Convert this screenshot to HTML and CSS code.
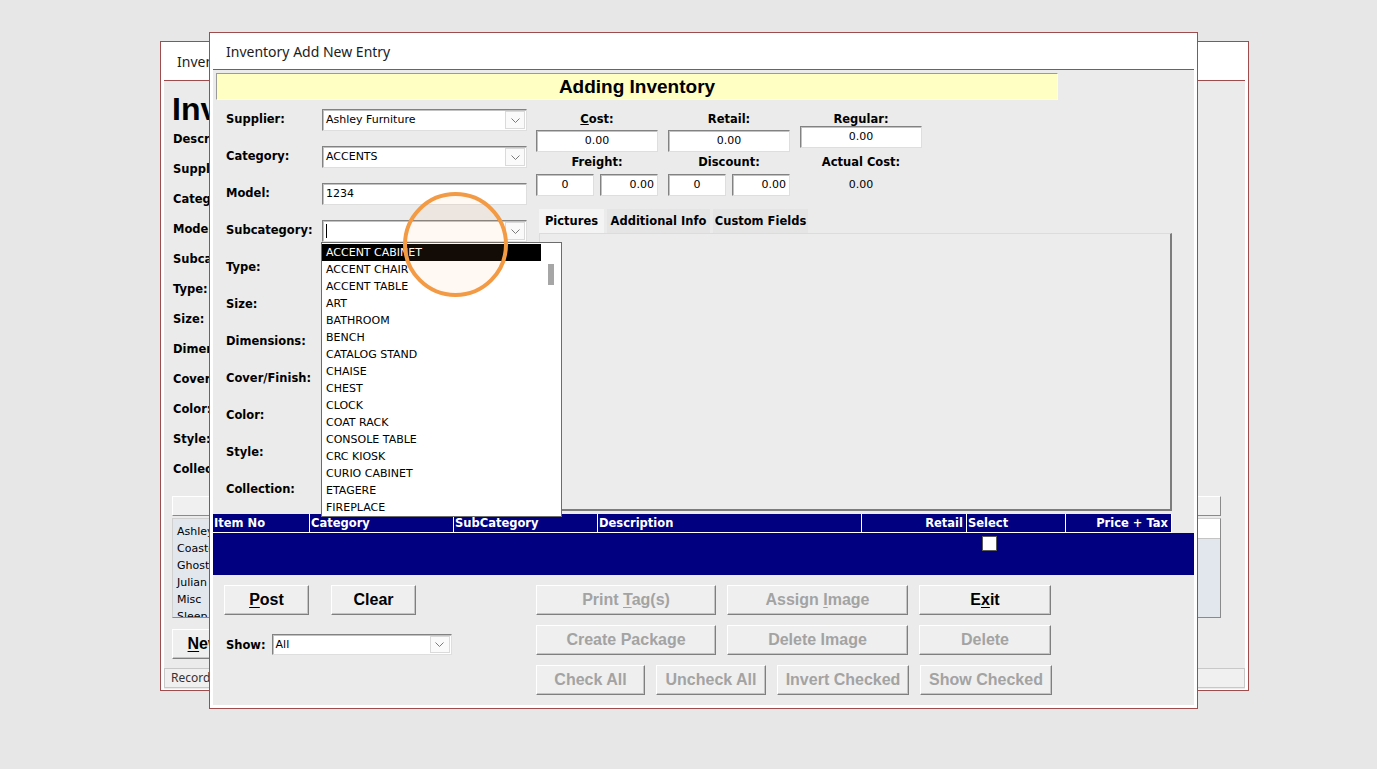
FILE: index.html
```html
<!DOCTYPE html>
<html>
<head>
  <meta charset="utf-8">
  <link rel="stylesheet" href="styles.css">
</head>
<body>
  <!-- Inventory window behind the dialog -->
  <div class="window window-back">
    <div class="window-title back-title"><span class="peek">Inventory</span></div>
    <div class="window-client back-client">
      <div class="back-heading peek">Inventory</div>
      <div class="back-fields peek">
        <span>Description:</span>
        <span>Supplier:</span>
        <span>Category:</span>
        <span>Model:</span>
        <span>Subcategory:</span>
        <span>Type:</span>
        <span>Size:</span>
        <span>Dimensions:</span>
        <span>Cover/Finish:</span>
        <span>Color:</span>
        <span>Style:</span>
        <span>Collection:</span>
      </div>
      <div class="back-bar"></div>
      <div class="back-list">
        <div class="back-names">
          <div>Ashley Furniture</div>
          <div>Coaster</div>
          <div>Ghost</div>
          <div>Julian</div>
          <div>Misc</div>
          <div>Sleep</div>
        </div>
        <div class="back-detail">
          <div class="back-detail-head"></div>
        </div>
      </div>
      <button class="btn back-new"><u>N</u>ew</button>
      <div class="back-status"><span class="peek">Record: 1 of 6</span></div>
    </div>
  </div>

  <!-- Add new entry dialog -->
  <div class="window dialog">
    <div class="window-title dialog-title">Inventory Add New Entry</div>
    <div class="window-client dialog-client">
      <div class="banner">Adding Inventory</div>

      <div class="form-top">
        <div class="field-grid">
          <span class="field-label">Supplier:</span>
          <div class="combo">
            <span class="combo-text">Ashley Furniture</span>
            <span class="combo-btn"><svg width="9" height="5" viewBox="0 0 9 5"><polyline points="0.5,0.5 4.5,4.5 8.5,0.5" fill="none" stroke="#7a7a7a"/></svg></span>
          </div>

          <span class="field-label">Category:</span>
          <div class="combo">
            <span class="combo-text">ACCENTS</span>
            <span class="combo-btn"><svg width="9" height="5" viewBox="0 0 9 5"><polyline points="0.5,0.5 4.5,4.5 8.5,0.5" fill="none" stroke="#7a7a7a"/></svg></span>
          </div>

          <span class="field-label">Model:</span>
          <div class="box box-left">1234</div>

          <span class="field-label">Subcategory:</span>
          <div class="combo">
            <span class="combo-text"><span class="caret"></span></span>
            <span class="combo-btn"><svg width="9" height="5" viewBox="0 0 9 5"><polyline points="0.5,0.5 4.5,4.5 8.5,0.5" fill="none" stroke="#7a7a7a"/></svg></span>

            <div class="dropdown">
              <div class="dropdown-items">
                <div class="dropdown-item selected">ACCENT CABINET</div>
                <div class="dropdown-item">ACCENT CHAIR</div>
                <div class="dropdown-item">ACCENT TABLE</div>
                <div class="dropdown-item">ART</div>
                <div class="dropdown-item">BATHROOM</div>
                <div class="dropdown-item">BENCH</div>
                <div class="dropdown-item">CATALOG STAND</div>
                <div class="dropdown-item">CHAISE</div>
                <div class="dropdown-item">CHEST</div>
                <div class="dropdown-item">CLOCK</div>
                <div class="dropdown-item">COAT RACK</div>
                <div class="dropdown-item">CONSOLE TABLE</div>
                <div class="dropdown-item">CRC KIOSK</div>
                <div class="dropdown-item">CURIO CABINET</div>
                <div class="dropdown-item">ETAGERE</div>
                <div class="dropdown-item">FIREPLACE</div>
              </div>
              <div class="dropdown-scroll">
                <div class="scroll-thumb"></div>
              </div>
            </div>
            <div class="callout"></div>
          </div>

          <span class="field-label">Type:</span>
          <span></span>
          <span class="field-label">Size:</span>
          <span></span>
          <span class="field-label">Dimensions:</span>
          <span></span>
          <span class="field-label">Cover/Finish:</span>
          <span></span>
          <span class="field-label">Color:</span>
          <span></span>
          <span class="field-label">Style:</span>
          <span></span>
          <span class="field-label">Collection:</span>
          <span></span>
        </div>

        <div class="form-right">
          <div class="price-grid">
            <span class="price-label"><u>C</u>ost:</span>
            <span class="price-label">Retail:</span>
            <span class="price-label">Regular:</span>

            <div class="box">0.00</div>
            <div class="box">0.00</div>
            <div class="box box-raised">0.00</div>

            <span class="price-label">Freight:</span>
            <span class="price-label">Discount:</span>
            <span class="price-label">Actual Cost:</span>

            <div class="box-pair">
              <div class="box">0</div>
              <div class="box box-right">0.00</div>
            </div>
            <div class="box-pair">
              <div class="box">0</div>
              <div class="box box-right">0.00</div>
            </div>
            <div class="price-value">0.00</div>
          </div>

          <div class="tabs">
            <span class="tab active">Pictures</span>
            <span class="tab tab-info">Additional Info</span>
            <span class="tab tab-custom">Custom Fields</span>
          </div>
          <div class="tab-panel"></div>
        </div>
      </div>

      <div class="sheet">
        <div class="sheet-head">
          <span>Item No</span>
          <span>Category</span>
          <span>SubCategory</span>
          <span>Description</span>
          <span class="num">Retail</span>
          <span>Select</span>
          <span class="num">Price + Tax</span>
        </div>
        <div class="sheet-body">
          <span class="check"></span>
        </div>
      </div>

      <div class="form-bottom">
        <div class="bottom-left">
          <div class="btn-row wide-gap">
            <button class="btn btn-small"><u>P</u>ost</button>
            <button class="btn btn-small">Clear</button>
          </div>
          <div class="show-row">
            <span class="field-label">Show:</span>
            <div class="combo combo-show">
              <span class="combo-text">All</span>
              <span class="combo-btn"><svg width="9" height="5" viewBox="0 0 9 5"><polyline points="0.5,0.5 4.5,4.5 8.5,0.5" fill="none" stroke="#7a7a7a"/></svg></span>
            </div>
          </div>
        </div>

        <div class="bottom-right">
          <div class="btn-row">
            <button class="btn disabled w180">Print <u>T</u>ag(s)</button>
            <button class="btn disabled w181">Assign <u>I</u>mage</button>
            <button class="btn w132">E<u>x</u>it</button>
          </div>
          <div class="btn-row">
            <button class="btn disabled w180">Create Package</button>
            <button class="btn disabled w181">Delete Image</button>
            <button class="btn disabled w132">Delete</button>
          </div>
          <div class="btn-row">
            <button class="btn disabled w109">Check All</button>
            <button class="btn disabled w110">Uncheck All</button>
            <button class="btn disabled w132">Invert Checked</button>
            <button class="btn disabled w132">Show Checked</button>
          </div>
        </div>
      </div>
    </div>
  </div>
</body>
</html>
```

FILE: styles.css
```css
html, body {
  width: 1377px;
  height: 769px;
}

body {
  margin: 0;
  position: relative;
  overflow: hidden;
  background: #e7e7e7;
  font-family: "DejaVu Sans", Verdana, sans-serif;
  font-size: 11px;
  color: #000;
}

/* windows */

.window {
  position: absolute;
  box-sizing: border-box;
  border: 1px solid #9e4c4c;
  background: #fff;
  display: flex;
  flex-direction: column;
}

.window-title {
  flex: none;
  display: flex;
  align-items: center;
  padding-left: 16px;
  font-family: "Noto Sans", "Open Sans", sans-serif;
  font-size: 14px;
  color: #1c1c1c;
}

.window-client {
  flex: 1;
  min-height: 0;
  margin: 0 3px 3px;
  background: #ebebeb;
  border-top: 1px solid #9e4c4c;
  overflow: hidden;
}

.window-back {
  left: 160px;
  top: 41px;
  width: 1089px;
  height: 650px;
}

.back-title {
  height: 38px;
}

.dialog {
  left: 209px;
  top: 32px;
  width: 989px;
  height: 677px;
}

.dialog-title {
  height: 36px;
}

/* back window: only its left strip shows past the dialog */

.peek {
  display: block;
  overflow: hidden;
  white-space: nowrap;
}

.back-title .peek {
  width: 32px;
}

.back-client {
  margin-bottom: 1px;
  padding: 0 24px 0 8px;
  display: flex;
  flex-direction: column;
}

.back-heading {
  width: 37px;
  margin-top: 14px;
  font-family: "Liberation Sans", Arial, sans-serif;
  font-size: 32px;
  font-weight: 700;
  line-height: 29px;
}

.back-fields {
  width: 36px;
  display: grid;
  grid-auto-rows: 30px;
  align-items: center;
  padding-left: 1px;
  font-weight: 700;
  font-size: 11.5px;
}

.back-bar {
  margin-top: 12px;
  height: 20px;
  box-sizing: border-box;
  background: #f0f0f0;
  border: 1px solid;
  border-color: #fff #8a8a8a #8a8a8a #fff;
}

.back-list {
  margin-top: 2px;
  height: 100px;
  box-sizing: border-box;
  display: flex;
  background: #e2e7ee;
  border: 1px solid;
  border-color: #d0d0d0 #8a8a8a #8a8a8a #d0d0d0;
  overflow: hidden;
}

.back-names {
  width: 32px;
  padding: 4px 0 0 4px;
  overflow: hidden;
}

.back-names div {
  height: 17px;
  line-height: 17px;
  white-space: nowrap;
}

.back-detail {
  flex: 1;
}

.back-detail-head {
  height: 19px;
  background: #fff;
  border-bottom: 1px solid #c4c4c4;
}

.back-new {
  margin-top: 11px;
  width: 64px;
  height: 32px;
  font-size: 20px;
}

.back-status {
  margin: 9px -24px 0 -8px;
  height: 20px;
  box-sizing: border-box;
  padding-left: 6px;
  background: #f0f0f0;
  border: 1px solid #c8c8c8;
  font-family: "Noto Sans", "Open Sans", sans-serif;
  font-size: 12px;
  line-height: 18px;
  color: #333;
}

.back-status .peek {
  width: 38px;
}

/* dialog contents */

.dialog-client {
  padding-top: 3px;
}

.banner {
  margin-left: 3px;
  width: 842px;
  height: 27px;
  box-sizing: border-box;
  background: #ffffc4;
  border: 1px solid;
  border-color: #9a9a9a #fff #fff #9a9a9a;
  text-align: center;
  font-family: "Liberation Sans", Arial, sans-serif;
  font-size: 19px;
  font-weight: 700;
  line-height: 25px;
}

.form-top {
  margin-top: 9px;
  display: grid;
  grid-template-columns: 323px 1fr;
  height: 402px;
}

.field-grid {
  padding-left: 13px;
  display: grid;
  grid-template-columns: 96px 205px;
  grid-auto-rows: 22px;
  row-gap: 15px;
  align-items: center;
  align-content: start;
}

.field-label {
  font-weight: 700;
  font-size: 11.5px;
  white-space: nowrap;
  margin-top: -3px;
}

.box {
  height: 22px;
  box-sizing: border-box;
  background: #fff;
  border: 1px solid;
  border-color: #828282 #dedede #dedede #828282;
  box-shadow: inset 1px 1px 0 #c2c2c2;
  line-height: 20px;
  text-align: center;
  white-space: nowrap;
  overflow: hidden;
}

.box-left {
  text-align: left;
  padding-left: 3px;
}

.box-right {
  text-align: right;
  padding-right: 3px;
}

.box-raised {
  margin-top: -4px;
}

.combo {
  position: relative;
  height: 22px;
  box-sizing: border-box;
  display: flex;
  background: #fff;
  border: 1px solid;
  border-color: #828282 #dedede #dedede #828282;
  box-shadow: inset 1px 1px 0 #c2c2c2;
}

.combo-text {
  flex: 1;
  padding-left: 3px;
  line-height: 20px;
  white-space: nowrap;
  overflow: hidden;
  display: flex;
  align-items: center;
}

.combo-btn {
  width: 20px;
  margin: 1px;
  box-sizing: border-box;
  border: 1px solid #dadada;
  background: #fafafa;
  display: flex;
  align-items: center;
  justify-content: center;
}

.caret {
  width: 1px;
  height: 14px;
  background: #000;
}

/* open list of the subcategory combo */

.dropdown {
  position: absolute;
  left: -2px;
  top: 21px;
  width: 241px;
  height: 275px;
  box-sizing: border-box;
  display: flex;
  background: #fff;
  border: 1px solid #6c6c6c;
  z-index: 5;
}

.dropdown-items {
  width: 219px;
  padding-top: 1px;
  overflow: hidden;
}

.dropdown-item {
  height: 17px;
  line-height: 17px;
  padding-left: 4px;
  white-space: nowrap;
}

.dropdown-item.selected {
  background: #000;
  color: #fff;
}

.dropdown-scroll {
  flex: 1;
}

.scroll-thumb {
  width: 6px;
  height: 21px;
  margin: 21px 0 0 7px;
  background: #a6a6a6;
}

.callout {
  position: absolute;
  left: 80px;
  top: -29px;
  width: 105px;
  height: 105px;
  box-sizing: border-box;
  border: 4px solid #f39a45;
  border-radius: 50%;
  background: rgba(250, 160, 90, 0.07);
  z-index: 6;
}

/* prices and tabs */

.form-right {
  display: flex;
  flex-direction: column;
}

.price-grid {
  display: grid;
  grid-template-columns: repeat(3, 122px);
  grid-template-rows: 21px 22px 22px 22px;
  column-gap: 10px;
}

.price-label {
  text-align: center;
  font-weight: 700;
  font-size: 11.5px;
  line-height: 20px;
  white-space: nowrap;
}

.box-pair {
  display: grid;
  grid-template-columns: 1fr 1fr;
  column-gap: 6px;
}

.price-value {
  text-align: center;
  line-height: 22px;
}

.tabs {
  margin: 13px 0 0 3px;
  display: flex;
  gap: 3px;
  height: 24px;
}

.tab {
  width: 65px;
  text-align: center;
  font-weight: 700;
  font-size: 11.5px;
  line-height: 25px;
  white-space: nowrap;
  background: #e5e5e5;
}

.tab.active {
  background: #f4f4f4;
}

.tab-info {
  width: 103px;
}

.tab-custom {
  width: 95px;
}

.tab-panel {
  margin-left: 3px;
  width: 633px;
  height: 278px;
  box-sizing: border-box;
  background: #ececec;
  border: 1px solid #dcdcdc;
  border-right: 2px solid #7c7c7c;
  border-bottom: 2px solid #7c7c7c;
}

/* datasheet */

.sheet {
  margin-top: 3px;
}

.sheet-head {
  display: grid;
  grid-template-columns: 97px 144px 144px 264px 105px 99px 106px;
  width: 959px;
  height: 19px;
  box-sizing: border-box;
  background: #000080;
  border-bottom: 1px solid #fff;
  color: #fff;
  font-weight: 700;
  font-size: 11.5px;
  line-height: 18px;
}

.sheet-head span {
  border-right: 1px solid #fff;
  padding-left: 1px;
  white-space: nowrap;
  overflow: hidden;
}

.sheet-head .num {
  text-align: right;
  padding-right: 3px;
}

.sheet-body {
  height: 42px;
  background: #000080;
  display: grid;
  grid-template-columns: 97px 144px 144px 264px 105px 99px 106px;
  align-items: start;
}

.check {
  grid-column: 6;
  margin: 3px 0 0 15px;
  width: 15px;
  height: 15px;
  box-sizing: border-box;
  background: #fff;
  border: 1px solid #5a5a5a;
}

/* buttons */

.form-bottom {
  display: grid;
  grid-template-columns: 323px auto;
  padding-top: 10px;
}

.bottom-left {
  padding-left: 11px;
}

.bottom-right {
  display: flex;
  flex-direction: column;
  gap: 10px;
}

.btn-row {
  display: flex;
  gap: 11px;
}

.btn-row.wide-gap {
  gap: 22px;
}

.show-row {
  margin-top: 19px;
  padding-left: 2px;
  display: flex;
  align-items: center;
  gap: 6px;
}

.show-row .field-label {
  margin-top: 0;
}

.combo-show {
  width: 180px;
  height: 21px;
}

.btn {
  height: 30px;
  box-sizing: border-box;
  padding: 0;
  background: #efefef;
  border: 1px solid;
  border-color: #fff #7f7f7f #7f7f7f #fff;
  box-shadow: inset -1px -1px 0 #c4c4c4;
  font-family: "Liberation Sans", Arial, sans-serif;
  font-size: 16px;
  font-weight: 700;
  color: #000;
  white-space: nowrap;
}

.btn u {
  text-underline-offset: 2px;
}

.btn.disabled {
  color: #a3a3a3;
}

.btn-small {
  width: 85px;
}

.w180 { width: 180px; }
.w181 { width: 181px; }
.w132 { width: 132px; }
.w109 { width: 109px; }
.w110 { width: 110px; }
```
